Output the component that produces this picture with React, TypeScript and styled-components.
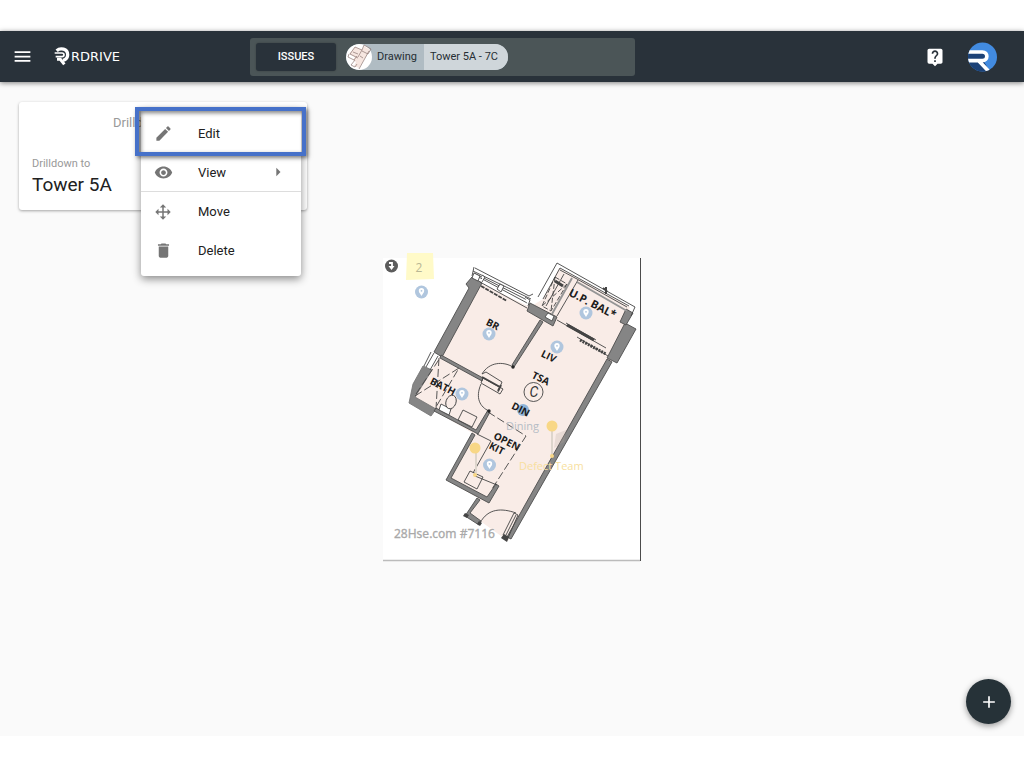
import React from "react";
import styled, { createGlobalStyle } from "styled-components";
import {
  MdMenu,
  MdLiveHelp,
  MdEdit,
  MdVisibility,
  MdDelete,
  MdAdd,
  MdArrowRight,
} from "react-icons/md";

const GlobalStyle = createGlobalStyle`
  * { box-sizing: border-box; }
  body { margin: 0; background: #fff; font-family: Roboto, "Liberation Sans", sans-serif; }
  button { font: inherit; border: 0; padding: 0; background: none; cursor: pointer; }
`;

const Page = styled.div`
  min-height: 100vh;
  padding: 31px 0 32px;
  display: flex;
  flex-direction: column;
`;

const Header = styled.header`
  height: 51px;
  display: grid;
  grid-template-columns: 250px minmax(0, 385px) 1fr;
  align-items: center;
  background: #29323a;
  color: #fff;
  box-shadow: 0 1px 5px rgba(0, 0, 0, 0.5);
  z-index: 1;
`;

const Brand = styled.div`
  display: flex;
  align-items: center;
  padding-left: 12px;
  gap: 21px;
`;

const IconButton = styled.button`
  display: flex;
  align-items: center;
  justify-content: center;
  color: #fff;
`;

const Logo = styled.a`
  display: flex;
  align-items: center;
  gap: 1px;
  color: #fff;
  text-decoration: none;
  font: 13px/16px "DejaVu Sans", sans-serif;
`;

const FilterBar = styled.div`
  height: 38px;
  display: flex;
  align-items: center;
  padding: 0 6px;
  gap: 10px;
  border-radius: 3px;
  background: #4b5557;
`;

const IssuesButton = styled.button`
  && {
    width: 80px;
    height: 28px;
    border-radius: 3px;
    background: #29323a;
    color: #fff;
    font-size: 11px;
    font-weight: 500;
    box-shadow: 0 0 2px rgba(0, 0, 0, 0.3);
  }
`;

const Chip = styled.div`
  display: flex;
  height: 26px;
  border-radius: 13px;
  overflow: hidden;
  background: #b0bcc3;
  color: #262e33;
  font-size: 11px;
  line-height: 26px;
`;

const ChipKind = styled.span`
  padding: 0 7px 0 5px;
`;

const ChipValue = styled.span`
  padding: 0 10px 0 6px;
  background: #cfd6da;
`;

const Actions = styled.div`
  display: flex;
  align-items: center;
  justify-content: flex-end;
  gap: 23px;
  padding-right: 27px;
`;

const Canvas = styled.main`
  position: relative;
  flex: 1;
  padding: 20px 19px 0;
  display: flex;
  flex-direction: column;
  background: #fafafa;
`;

const Card = styled.section`
  position: relative;
  width: 288px;
  height: 108px;
  padding: 12px 13px;
  border-radius: 3px;
  background: #fff;
  box-shadow: 0 1px 3px rgba(0, 0, 0, 0.35);
`;

const CardTitle = styled.div`
  padding-left: 81px;
  color: #999;
  font-size: 13px;
  line-height: 17px;
`;

const CardLabel = styled.div`
  margin-top: 26px;
  color: #999;
  font-size: 11px;
  line-height: 14px;
`;

const CardValue = styled.div`
  margin-top: 2px;
  color: #212121;
  font-size: 19px;
  line-height: 24px;
`;

const Menu = styled.div`
  position: absolute;
  left: 122px;
  top: 7px;
  width: 160px;
  padding: 5px 0 6px;
  border-radius: 3px;
  background: #fff;
  box-shadow: 0 3px 9px rgba(0, 0, 0, 0.45);
  z-index: 2;
`;

const MenuItem = styled.button<{ $divided?: boolean }>`
  && {
    width: 100%;
    height: 39px;
    padding: 0 13px;
    display: grid;
    grid-template-columns: 20px 1fr 20px;
    column-gap: 24px;
    align-items: center;
    text-align: left;
    color: #212121;
    font-size: 13px;
    border-bottom: ${(p) => (p.$divided ? "1px solid #ddd" : "0")};
  }
  svg {
    color: #757575;
    display: block;
  }
`;

const Highlight = styled.div`
  position: absolute;
  left: -6px;
  top: -2px;
  width: 171px;
  height: 49px;
  border: 4px solid #4671c9;
  box-shadow: 2px 2px 4px rgba(0, 0, 0, 0.5), inset 2px 2px 4px rgba(0, 0, 0, 0.5);
  pointer-events: none;
`;

const Drawing = styled.svg`
  display: block;
  width: 264px;
  height: 314px;
  margin: 40px auto 0;
`;

const Fab = styled.button`
  && {
    position: absolute;
    right: 13px;
    bottom: 12px;
    width: 45px;
    height: 45px;
    display: flex;
    align-items: center;
    justify-content: center;
    border-radius: 50%;
    background: #263238;
    color: #fff;
    box-shadow: 0 2px 6px rgba(0, 0, 0, 0.4);
  }
`;

const BrandMark = () => (
  <svg width="16" height="19" viewBox="0 0 48 57" fill="none" stroke="#fff" aria-hidden="true">
    <path d="M8 11C19 1 41 5 41 23c0 10-6 15-14 17" strokeWidth="10" />
    <path d="M2 18h22c8 0 8 11 0 11H5" strokeWidth="5" />
    <path d="M9 37h10l12 15" strokeWidth="9" />
  </svg>
);

const Avatar = () => (
  <svg width="29" height="30" viewBox="0 0 87 90" aria-hidden="true">
    <defs>
      <clipPath id="avatar">
        <circle cx="43.5" cy="45" r="43.5" />
      </clipPath>
    </defs>
    <g clipPath="url(#avatar)">
      <path d="M0 0h87v90H0z" fill="#428be0" />
      <path d="M0 28h45c14 0 14 26 0 26l24 40H0z" fill="#1c4277" />
      <path d="M0 30h43c18 0 18 26 0 26H0M32 56l32 34" fill="none" stroke="#fff" strokeWidth="11" />
    </g>
  </svg>
);

const ChipThumb = () => (
  <svg width="26" height="26" viewBox="0 0 26 26" aria-hidden="true">
    <circle cx="13" cy="13" r="13" fill="#fff" />
    <path d="M9 3 16 6 18 2 24 6 13 24 8 22 10 18 7 16 9 13 3 10Z" fill="#f6e6e0" />
    <path d="M9 3 16 6 12 13M9 3 4 10 12 14M16 6 18 1 25 5 22 10 16 7M3 10 2 13 8 16 11 12M9 16 5 21 9 23 11 20M23 7 13 25M7 8 12 10M14 12 17 14" fill="none" stroke="#8c7772" strokeWidth="0.7" />
  </svg>
);

const MoveIcon = () => (
  <svg width="18" height="18" viewBox="0 0 24 24" fill="currentColor" aria-hidden="true">
    <path d="M13 6v5h5V7.750L22.250 12 18 16.250V13h-5v5h3.250L12 22.250 7.750 18H11v-5H6v3.250L1.750 12 6 7.750V11h5V6H7.750L12 1.750 16.250 6H13Z" />
  </svg>
);

const Pin = ({ x, y }: { x: number; y: number }) => (
  <g transform={`translate(${x} ${y})`}>
    <circle r="6.500" fill="#b0c6de" />
    <path d="M0 4C-1.500 1.500-2.700.500-2.700-1.200a2.700 2.700 0 0 1 5.400 0C2.700.500 1.500 1.500 0 4Z" fill="#fff" />
    <circle cy="-1.200" r="0.900" fill="#b0c6de" />
  </g>
);

const Room = ({ x, y, angle = 27, size = 10, children }: { x: number; y: number; angle?: number; size?: number; children: string }) => (
  <text
    transform={`translate(${x} ${y}) rotate(${angle})`}
    textAnchor="middle"
    dominantBaseline="central"
    fontFamily="Open Sans, sans-serif"
    fontWeight="bold"
    fontSize={size}
    fill="#1b1b1b"
  >
    {children}
  </text>
);

const FloorPlan = () => (
  <Drawing viewBox="380 250 264 314" role="img" aria-label="Floor plan of Tower 5A - 7C">
    <path d="M383 258h257v302H383z" fill="#fff" />
    <path d="M383 560.500h257" stroke="#bbb" strokeWidth="1.500" />
    <path d="M640.500 258v303" stroke="#4a4a4a" />

    {/* Floor surface */}
    <path
      d="M482 284 530 307 543 299 559 268 630 307 612 362 508 541 483 523 468 515 478 498 448 481 474 434 413 398 440 356Z"
      fill="#f9ece7"
    />

    {/* Solid walls */}
    <g fill="#858585" stroke="#4d4d4d" strokeWidth="0.900">
      <path d="M466 284 472 277 482 283 442 357 434 352 469 288Z" />
      <path d="M423 366 432 370 415 397 436 409 431 416 409 403 413 384Z" stroke="#777" />
      <path d="M530 303 557 317 553 326 527 311Z" />
      <path d="M548 313 554 316 552 321 545 317Z" fill="#fff" />
      <path d="M625 323 636 329 617 363 607 358Z" />
      <path d="M626 309 633 313 626 325 620 322Z" />
      <path d="M607 359 612 362 511 539 507 537Z" />
      <path d="M441 355 483 378 482 381 440 358Z" />
      <path d="M540 320 543 322 514 367 512 365Z" />
      <path d="M436 408 476 430 488 410 490 412 478 434 434 411Z" />
      <path d="M472 433 475 435 451 478 487 497 496 484 499 486 489 503 446 480Z" />
      <path d="M477 498 480 500 470 513 481 521 479 525 465 516Z" />
    </g>

    {/* Windows, railings and partitions */}
    <g fill="none" stroke="#444" strokeWidth="0.900">
      <path d="M474 267 472 276M473 271 531 299M474 273 530 301.500M475 275 529 304M480 282 527 308M475 268 529 296 533 294" />
      <path d="M474 273 480 276 478 281 472 278ZM482 275 485 277 482 282M500 284 504 286 501 292 497 289ZM525 297 530 300 528 306" fill="#fff" />
      <path d="M481 286 507 301" strokeWidth="2" strokeDasharray="4 1" />
      <path d="M538 297 557 263 635 307 631 316M543 299 560 268 629 306M577 279 627 307M546 306 564 274M557 316 578 280M560 270 577 279" />
      <path d="M572 278 552 314M577 282 627 311" stroke="#959595" strokeWidth="2" />
      <path d="M555 277 567 284 551 311 542 306ZM555 277 551 311M567 284 542 306" strokeDasharray="5 2" />
      <path d="M555 281 563 286" strokeWidth="3" />
      <path d="M606 287v7M603 288l4 3" strokeWidth="2" />
      <path d="M557 320 606 348M566 323 596 340M577 337 608 356" />
      <path d="M567 325 594 340" strokeWidth="3" />
      <path d="M580 340 606 354" strokeWidth="3" strokeDasharray="2 1" />
      <path d="M434 353 426 367M438 356 430 370M431 352 424 366" />
      <path d="M415 396 459 368 436 407M439 358 436 409M416 394 440 358" strokeDasharray="8 3" />
      <path d="M483 378 503 389 500 394 481 383ZM482 374 486 372 502 382 498 392M482 374C489 362 503 361 513 367M481 384C475 398 480 407 489 411" />
      <path d="M482 377 500 387M501 385 498 391" strokeWidth="2" />
      <path d="M441 404 451 409 449 415 439 410Z" fill="#fff" />
      <ellipse cx="451" cy="402" rx="5" ry="7" transform="rotate(20 451 402)" fill="#f9ece7" />
      <path d="M463 410 477 417 472 427 458 420Z" />
      <path d="M488 412 526 436 492 489" strokeDasharray="8 3" />
      <path d="M477 434 491 441 473 473M475 476 497 485M470 471 483 477 477 489 464 482Z" />
      <path d="M480 523C488 508 502 508 516 513M514 513 518 515 508 538 503 535ZM516 515 506 535" />
      <circle cx="533.500" cy="392" r="9.500" />
    </g>
    <g fill="#262626">
      <circle cx="513" cy="367" r="1.700" />
      <circle cx="489" cy="411" r="1.700" />
      <path d="m465 513 4 2-2 3-4-2ZM479 521l3 2-2 3-3-2ZM504 534l5 3-2 5-6-4Z" fill="#444" />
    </g>

    <Pin x={421.5} y={292} />
    <Pin x={489} y={334} />
    <Pin x={586} y={313} />
    <Pin x={557} y={347} />
    <Pin x={462} y={394} />
    <Pin x={489.5} y={465} />
    <circle cx="523" cy="410" r="6" fill="#8fb4d8" />

    <Room x={493} y={324}>BR</Room>
    <Room x={593} y={303} size={11}>U.P. BAL*</Room>
    <Room x={549} y={356}>LIV</Room>
    <Room x={541} y={378}>TSA</Room>
    <Room x={521} y={409}>DIN</Room>
    <Room x={443} y={386}>BATH</Room>
    <Room x={507} y={441}>OPEN</Room>
    <Room x={497} y={448}>KIT</Room>
    <text x="534" y="397" textAnchor="middle" fontFamily="Roboto, sans-serif" fontStyle="italic" fontSize="14" fill="#333">C</text>

    {/* Annotations placed on the drawing */}
    <circle cx="391.500" cy="266" r="6.500" fill="#5c5c5c" />
    <path d="M389 263h3v3" fill="none" stroke="#fff" strokeWidth="1.800" />
    <path d="M388.500 266h6l-3 4Z" fill="#fff" />
    <path d="M407 253h26l1 26-28 1Z" fill="#fffac8" />
    <g fontFamily="Open Sans, sans-serif">
      <text x="419" y="272" textAnchor="middle" fontSize="12" fill="#b9b795">2</text>
      <text x="506" y="430" fontSize="11" fill="#b5bcc5">Dining</text>
      <text x="519" y="470" fontSize="11" fill="#f8dfa0">Defect Team</text>
      <text x="394" y="538" fontFamily="Noto Sans, sans-serif" fontSize="12" fill="#a9a9a9" stroke="#a9a9a9" strokeWidth="0.300">28Hse.com #7116</text>
    </g>
    <path d="M556 434 566 430 564 442 554 448Z" fill="#b9a9a1" opacity="0.250" />
    <path d="M552 430v27M476 452v22" stroke="#ddd5cc" strokeWidth="2" />
    <g fill="#f8d786">
      <circle cx="552" cy="426" r="5.500" />
      <circle cx="475" cy="448" r="5.500" />
      <circle cx="552" cy="456" r="2" />
      <circle cx="475" cy="475" r="2" />
    </g>
  </Drawing>
);

export default function App() {
  return (
    <>
      <GlobalStyle />
      <Page>
        <Header>
          <Brand>
            <IconButton aria-label="Open navigation"><MdMenu size={21} /></IconButton>
            <Logo href="#"><BrandMark />RDRIVE</Logo>
          </Brand>
          <FilterBar>
            <IssuesButton>ISSUES</IssuesButton>
            <Chip>
              <ChipThumb />
              <ChipKind>Drawing</ChipKind>
              <ChipValue>Tower 5A - 7C</ChipValue>
            </Chip>
          </FilterBar>
          <Actions>
            <IconButton aria-label="Help"><MdLiveHelp size={20} /></IconButton>
            <IconButton aria-label="Account"><Avatar /></IconButton>
          </Actions>
        </Header>
        <Canvas>
          <Card>
            <CardTitle>Drilldown</CardTitle>
            <CardLabel>Drilldown to</CardLabel>
            <CardValue>Tower 5A</CardValue>
            <Menu>
              <MenuItem><MdEdit size={19} />Edit</MenuItem>
              <MenuItem $divided><MdVisibility size={19} />View<MdArrowRight size={20} /></MenuItem>
              <MenuItem><MoveIcon />Move</MenuItem>
              <MenuItem><MdDelete size={19} />Delete</MenuItem>
              <Highlight />
            </Menu>
          </Card>
          <FloorPlan />
          <Fab aria-label="Add"><MdAdd size={20} /></Fab>
        </Canvas>
      </Page>
    </>
  );
}
